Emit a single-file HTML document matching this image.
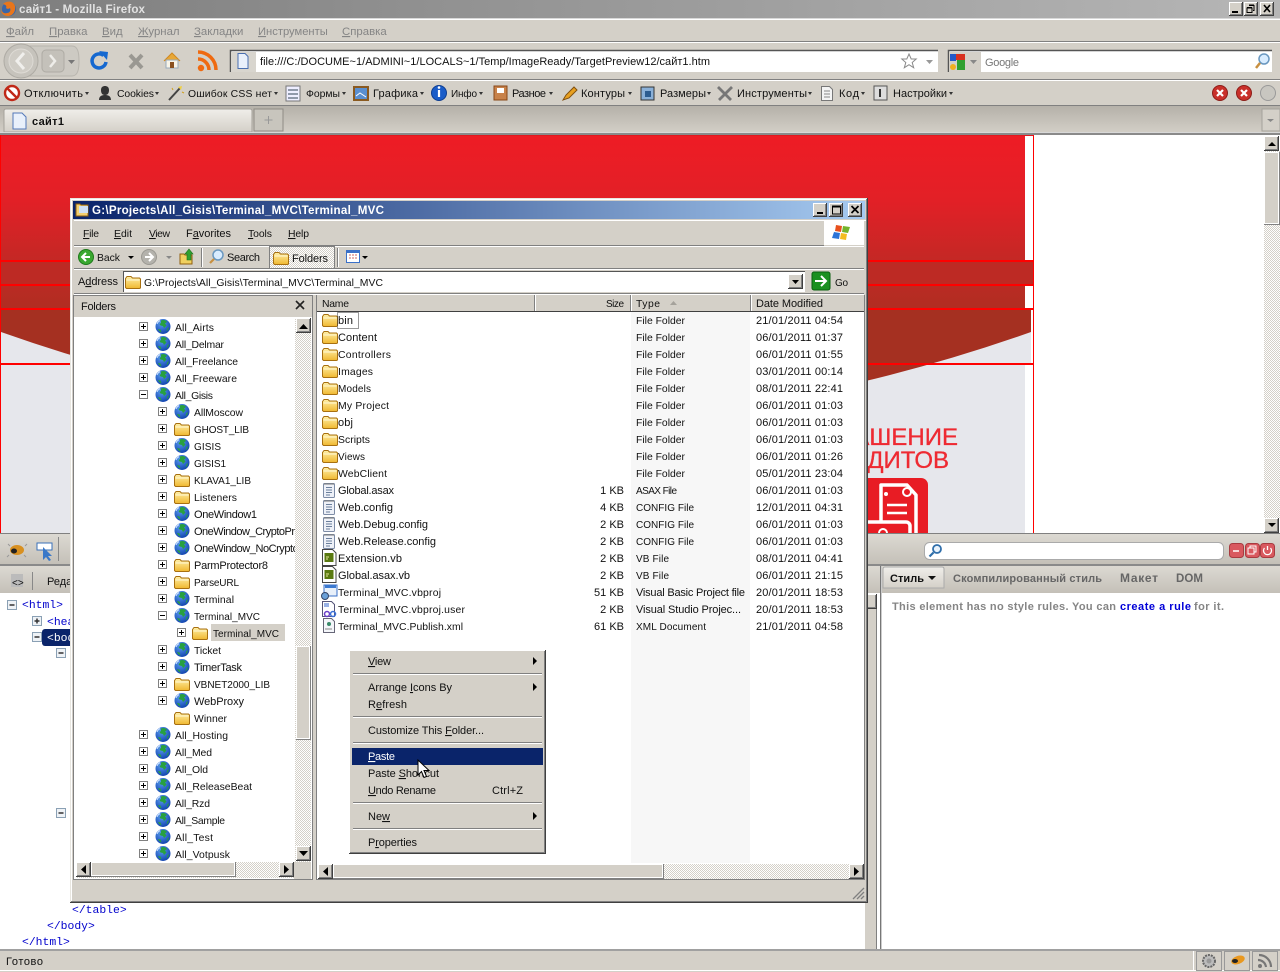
<!DOCTYPE html>
<html lang="ru"><head><meta charset="utf-8"><title>сайт1 - Mozilla Firefox</title>
<style>
html,body{margin:0;padding:0;width:1280px;height:972px;overflow:hidden;background:#fff}
svg{display:block}
text{font-family:"Liberation Sans",sans-serif;font-size:11px;fill:#111;white-space:pre}
text.s{font-size:10px}
text.h{font-size:10.4px}
.m{fill:#858585;font-size:11.4px}
.b{font-weight:bold}
.c{font-family:"Liberation Mono",monospace;font-size:11.4px;fill:#00c}
.u{text-decoration:underline}
.r{text-anchor:end}
.g{fill:#666;font-weight:bold}
</style></head><body>
<svg width="1280" height="972" viewBox="0 0 1280 972" xmlns="http://www.w3.org/2000/svg">
<defs>
<linearGradient id="tt" x1="0" x2="1" y1="0" y2="0"><stop offset="0" stop-color="#7e7e7e"/><stop offset="1" stop-color="#b6b6b6"/></linearGradient>
<linearGradient id="wt" x1="0" x2="1" y1="0" y2="0"><stop offset="0" stop-color="#0a246a"/><stop offset="1" stop-color="#a6caf0"/></linearGradient>
<linearGradient id="red" x1="0" x2="0" y1="0" y2="1"><stop offset="0" stop-color="#ee1c25"/><stop offset=".33" stop-color="#e22026"/><stop offset=".64" stop-color="#c32825"/><stop offset="1" stop-color="#a73020"/></linearGradient>
<linearGradient id="tb" x1="0" x2="0" y1="0" y2="1"><stop offset="0" stop-color="#b5b1a9"/><stop offset="1" stop-color="#d4d0c8"/></linearGradient>
<linearGradient id="tab" x1="0" x2="0" y1="0" y2="1"><stop offset="0" stop-color="#f0eeea"/><stop offset="1" stop-color="#d4d0c8"/></linearGradient>
<linearGradient id="fb" x1="0" x2="0" y1="0" y2="1"><stop offset="0" stop-color="#dcd9d2"/><stop offset="1" stop-color="#c4c0b8"/></linearGradient>
<radialGradient id="gl" cx=".4" cy=".3" r=".8"><stop offset="0" stop-color="#5a9cf0"/><stop offset="1" stop-color="#0a3aa8"/></radialGradient>
<linearGradient id="fo" x1="0" x2="0" y1="0" y2="1"><stop offset="0" stop-color="#fff0a8"/><stop offset="1" stop-color="#f0b830"/></linearGradient>
<pattern id="h" width="2" height="2" patternUnits="userSpaceOnUse"><rect width="2" height="2" fill="#fff"/><rect width="1" height="1" fill="#d4d0c8"/><rect x="1" y="1" width="1" height="1" fill="#d4d0c8"/></pattern>
<symbol id="globe" width="16" height="17" viewBox="0 0 16 17"><circle cx="8" cy="8.5" r="7.500" fill="url(#gl)"/><path d="M6 2.500c2-1 5-.5 6 1.500l-2 1.500 1.500 2-2.500 2.500-1-2-2.500-.5-1-1.500 1.500-1z" fill="#28a040"/><path d="M3 11l2.500.5 1 3c-1.500-.5-3-2-3.500-3.500z" fill="#28a040"/><path d="M12.500 10l1.500-1-1 3-1.500 1.500z" fill="#28a040"/><path d="M2 6a6.500 6.500 0 0 1 3-3.500" stroke="#cfe4ff" fill="none"/></symbol>
<symbol id="folder" width="16" height="14" viewBox="0 0 16 14"><path d="M.5 3.500 2 1.500h4l1.500 1.500h7l1 1v9l-1 .5h-13l-1-1z" fill="url(#fo)" stroke="#a87010"/><path d="M1.500 5h13" stroke="#fff8d8"/></symbol>
<symbol id="plus" width="9" height="9" viewBox="0 0 9 9"><rect x=".5" y=".5" width="8" height="8" fill="#fff" stroke="#808080"/><path d="M2 4.500h5M4.500 2v5" stroke="#000"/></symbol>
<symbol id="minus" width="9" height="9" viewBox="0 0 9 9"><rect x=".5" y=".5" width="8" height="8" fill="#fff" stroke="#808080"/><path d="M2 4.500h5" stroke="#000"/></symbol>
<symbol id="fmin" width="10" height="10" viewBox="0 0 10 10"><rect x=".5" y=".5" width="9" height="9" fill="#eef2f6" stroke="#8aa0b4"/><path d="M2.500 5h5" stroke="#333" stroke-width="1.500"/></symbol>
<symbol id="fplus" width="10" height="10" viewBox="0 0 10 10"><rect x=".5" y=".5" width="9" height="9" fill="#eef2f6" stroke="#8aa0b4"/><path d="M2.500 5h5M5 2.500v5" stroke="#333" stroke-width="1.500"/></symbol>
<symbol id="note" width="14" height="16" viewBox="0 0 14 16"><rect x="1.500" y="1.500" width="11" height="14" rx="1" fill="#eef1f8" stroke="#7d8ca6"/><path d="M4 5.500h6M4 8h6M4 10.500h6M4 13h4" stroke="#6a7f9c"/><path d="M3 1v2M5 1v2M7 1v2M9 1v2M11 1v2" stroke="#777"/></symbol>
<symbol id="vb" width="15" height="17" viewBox="0 0 15 17"><path d="M.5.500h10l3.500 3.500v12.500h-13.500z" fill="#fff" stroke="#444"/><rect x="2.500" y="4" width="9" height="9" fill="#5a7a10"/><path d="M4 8h3M4 10h2" stroke="#e8e8a0"/></symbol>
<symbol id="sb" width="15" height="15" viewBox="0 0 15 15"><rect width="15" height="15" fill="#404040"/><rect width="14" height="14" fill="#fff"/><rect x="1" y="1" width="13" height="13" fill="#808080"/><rect x="1" y="1" width="12" height="12" fill="#d4d0c8"/></symbol>
<symbol id="cap" width="14" height="14" viewBox="0 0 14 14"><rect width="14" height="14" fill="#404040"/><rect width="13" height="13" fill="#fff"/><rect x="1" y="1" width="12" height="12" fill="#808080"/><rect x="1" y="1" width="11" height="11" fill="#d4d0c8"/></symbol>
<symbol id="xc" width="16" height="16" viewBox="0 0 16 16"><circle cx="8" cy="8" r="7.500" fill="#c9302a" stroke="#8c1d18"/><path d="M5 5l6 6M11 5l-6 6" stroke="#fff" stroke-width="2.200"/></symbol>
<symbol id="rb" width="15" height="15" viewBox="0 0 15 15"><rect x=".5" y=".5" width="14" height="14" rx="3" fill="#d9595f" stroke="#a83b40"/></symbol>
<clipPath id="tc"><rect x="74" y="317" width="222" height="545"/></clipPath>
<clipPath id="pc"><rect x="0" y="135" width="1264" height="398"/></clipPath>
</defs>

<!-- browser chrome -->
<rect width="1280" height="972" fill="#d4d0c8"/>
<rect width="1280" height="18" fill="url(#tt)"/>
<rect y="18" width="1280" height="1" fill="#d8d8d8"/><rect y="19" width="1280" height="1" fill="#fff"/>
<circle cx="9" cy="9" r="7" fill="#3a66a8"/><path d="M3 4c3-3 10-4 12 2 1 5-2 10-7 10-4 0-7-3-7-6 1 2 3 4 6 3 3 0 4-3 3-5-1 1-3 1-4 0 1-2 0-3-3-4z" fill="#e8761c"/>
<text x="19" y="13" class="b" style="fill:#e2e2e2;font-size:11.6px" textLength="126">сайт1 - Mozilla Firefox</text>
<use href="#cap" x="1229" y="2"/><use href="#cap" x="1244" y="2"/><use href="#cap" x="1260" y="2"/>
<path d="M1232 12h6" stroke="#000" stroke-width="2"/>
<path d="M1249 5.500h5v5h-1M1247 8h5v4.500h-5z" fill="none" stroke="#000"/><path d="M1249 5h5M1247 7.500h5" stroke="#000" stroke-width="1"/>
<path d="M1264 5l6 7M1270 5l-6 7" stroke="#000" stroke-width="1.600"/>

<text x="6" y="35" class="m"><tspan class="u">Ф</tspan>айл</text><text x="49" y="35" class="m"><tspan class="u">П</tspan>равка</text><text x="102" y="35" class="m"><tspan class="u">В</tspan>ид</text><text x="138" y="35" class="m"><tspan class="u">Ж</tspan>урнал</text><text x="194" y="35" class="m"><tspan class="u">З</tspan>акладки</text><text x="258" y="35" class="m" style="font-size:11.2px"><tspan class="u">И</tspan>нструменты</text><text x="342" y="35" class="m"><tspan class="u">С</tspan>правка</text>
<rect y="41" width="1280" height="1" fill="#808080"/><rect y="42" width="1280" height="1" fill="#fff"/>
<!-- nav -->
<path d="M22 46h50c6 0 7 7 7 15s-1 15-7 15H22z" fill="#cdcac3" stroke="#b8b5ae"/>
<circle cx="21" cy="61" r="17" fill="#c6c3bc" stroke="#aeaba4"/><circle cx="21" cy="61" r="12" fill="#cfccc5" stroke="#dedbd5"/>
<path d="M24 53l-7 8 7 8" fill="none" stroke="#f0efec" stroke-width="3"/>
<rect x="42" y="50" width="22" height="22" rx="4" fill="#c4c1ba" stroke="#aeaba4"/>
<path d="M50 55l5 6-5 6" fill="none" stroke="#eeede9" stroke-width="2.500"/>
<path d="M68 60h7l-3.500 4z" fill="#777"/>
<path d="M106 62a7 7 0 1 1-2.500-6.500" fill="none" stroke="#1568d0" stroke-width="3.500"/><path d="M99 51l9 1-1 8z" fill="#1568d0"/>
<path d="M130 55l12 13M142 55l-12 13" stroke="#9a9892" stroke-width="4"/>
<path d="M164 61l8-8 8 8" fill="#e8a838" stroke="#d08820"/><path d="M166 60h12v8h-12z" fill="#f8f4e8" stroke="#9ab"/><rect x="170" y="62" width="4" height="6" fill="#8a5020"/>
<circle cx="201" cy="68" r="3.200" fill="#ef6a10"/><path d="M198 59a11 11 0 0 1 11 11" fill="none" stroke="#ef6a10" stroke-width="3.500"/><path d="M198 52a18 18 0 0 1 18 18" fill="none" stroke="#ef6a10" stroke-width="3.500"/>
<rect x="230" y="50" width="708" height="22" fill="#fff"/><path d="M230.500 72V50.500H938" fill="none" stroke="#555" stroke-width="1.500"/>
<rect x="231" y="52" width="25" height="20" fill="#d8d5ce"/>
<path d="M238 53.500h7l3 3v12h-10z" fill="#e9f0fb" stroke="#4a6fb0"/>
<text x="260" y="65" textLength="450">file:///C:/DOCUME~1/ADMINI~1/LOCALS~1/Temp/ImageReady/TargetPreview12/сайт1.htm</text>
<path d="M909 54l2.200 5h5l-4 3.500 1.500 5.200-4.700-3-4.700 3 1.500-5.200-4-3.500h5z" fill="#fff" stroke="#8a8a8a"/>
<path d="M926 60h7l-3.500 4z" fill="#999"/>
<rect x="948" y="50" width="324" height="22" fill="#fff"/><path d="M948.500 72V50.500H1272" fill="none" stroke="#555" stroke-width="1.500"/>
<rect x="949" y="52" width="32" height="20" fill="#d4d0c8"/>
<rect x="950" y="54" width="6" height="7" fill="#2458c8"/><rect x="956" y="54" width="9" height="6" fill="#d83020"/><circle cx="953" cy="67" r="3" fill="#f0b020"/><rect x="957" y="60" width="8" height="10" fill="#30a030"/>
<path d="M970 60h7l-3.500 4z" fill="#888"/>
<text x="985" y="66" style="fill:#777" textLength="34">Google</text>
<circle cx="1264" cy="59" r="5" fill="#d8ecff" stroke="#6a98c0" stroke-width="1.500"/><path d="M1260 63l-4 5" stroke="#c89040" stroke-width="2.500"/>
<rect y="79" width="1280" height="1" fill="#808080"/><rect y="80" width="1280" height="1" fill="#fff"/>
<!-- web dev toolbar -->
<circle cx="12" cy="93" r="7" fill="#fff" stroke="#c02818" stroke-width="2.400"/><path d="M7.500 88.500l9 9" stroke="#c02818" stroke-width="2.400"/>
<text x="24" y="97" textLength="59">Отключить</text><path d="M85 92h4l-2 3z" fill="#333"/>
<path d="M99 100c0-4 3-5 6-5s6 1 6 5zM105 95c-3 0-4-2-4-5s2-4 4-4 4 1 4 4-1 5-4 5z" fill="#333"/>
<text x="117" y="97" class="h" textLength="37">Cookies</text><path d="M155 92h4l-2 3z" fill="#333"/>
<path d="M169 100l11-12" stroke="#444" stroke-width="2"/><path d="M178 87l4-1-1 4z" fill="#f0d040"/><path d="M172 88l1 2M182 92l2 1" stroke="#d0a020"/>
<text x="188" y="97" class="h" textLength="84">Ошибок CSS нет</text><path d="M274 92h4l-2 3z" fill="#333"/>
<rect x="286" y="86" width="14" height="15" fill="#eef" stroke="#777"/><path d="M288 90h10M288 94h10M288 98h10" stroke="#345"/>
<text x="306" y="97" class="h" textLength="34">Формы</text><path d="M342 92h4l-2 3z" fill="#333"/>
<rect x="354" y="87" width="14" height="13" fill="#5a8fd0" stroke="#8a5a20" stroke-width="2"/><path d="M356 96l4-3 6 4" stroke="#fff" fill="none"/>
<text x="373" y="97" textLength="45">Графика</text><path d="M420 92h4l-2 3z" fill="#333"/>
<circle cx="439" cy="93" r="7.500" fill="#1a5cc8" stroke="#0e3e90"/><path d="M439 90v7" stroke="#fff" stroke-width="2.200"/><circle cx="439" cy="87.500" r="1.300" fill="#fff"/>
<text x="451" y="97" class="s" textLength="26">Инфо</text><path d="M479 92h4l-2 3z" fill="#333"/>
<rect x="494" y="86" width="13" height="14" fill="#c8824a" stroke="#884818"/><rect x="497" y="88" width="7" height="5" fill="#fff"/>
<text x="512" y="97" textLength="34">Разное</text><path d="M549 92h4l-2 3z" fill="#333"/>
<path d="M563 100l3-5 8-8 3 3-8 8z" fill="#e8a020" stroke="#805010"/>
<text x="581" y="97" textLength="44">Контуры</text><path d="M628 92h4l-2 3z" fill="#333"/>
<rect x="641" y="87" width="13" height="13" fill="#8ab0d8" stroke="#333"/><rect x="645" y="91" width="6" height="6" fill="#2c5c90"/>
<text x="660" y="97" textLength="46">Размеры</text><path d="M707 92h4l-2 3z" fill="#333"/>
<path d="M718 87l13 13M732 87l-13 13" stroke="#777" stroke-width="2.800"/>
<text x="737" y="97" textLength="70">Инструменты</text><path d="M808 92h4l-2 3z" fill="#333"/>
<path d="M821.500 86.500h8l3 3v11h-11z" fill="#f4f4f4" stroke="#777"/><path d="M824 91h6M824 94h6M824 97h6" stroke="#888"/>
<text x="839" y="97" textLength="20">Код</text><path d="M861 92h4l-2 3z" fill="#333"/>
<rect x="874" y="86" width="13" height="14" fill="#ddd" stroke="#555"/><path d="M880 89v8" stroke="#333" stroke-width="2"/>
<text x="893" y="97" textLength="54">Настройки</text><path d="M949 92h4l-2 3z" fill="#333"/>
<use href="#xc" x="1212" y="85"/><use href="#xc" x="1236" y="85"/><circle cx="1268" cy="93" r="7.500" fill="#c8c6c0" stroke="#999"/>
<rect y="105" width="1280" height="1" fill="#808080"/>
<!-- tabs -->
<rect y="106" width="1280" height="28" fill="url(#tb)"/>
<path d="M4 132v-21q0-2 2-2h244q2 0 2 2v21z" fill="url(#tab)" stroke="#a5a29b"/>
<path d="M13 113h9l4 4v12H13z" fill="#e9f0fb" stroke="#5478b8"/>
<text x="32" y="125" class="b" textLength="32">сайт1</text>
<rect x="254" y="109" width="29" height="22" fill="#c8c5bd" stroke="#8f8c85"/><path d="M268.500 116v8M264.500 120h8" stroke="#999"/>
<rect x="1262" y="109" width="18" height="22" fill="#d4d0c8" stroke="#a5a29b"/><path d="M1267 119h7l-3.500 3z" fill="#888"/>
<rect y="132" width="1280" height="1" fill="#d8d8d8"/><rect y="133" width="1280" height="2" fill="#8a8a8a"/>

<!-- page -->
<rect y="135" width="1280" height="398" fill="#fff"/>
<g clip-path="url(#pc)">
<rect x="1" y="365" width="1024" height="168" fill="#e6e7ec"/>
<rect x="1" y="136" width="1024" height="197" fill="url(#red)"/>
<rect x="1" y="261" width="1032" height="24" fill="#bd2a24"/>
<rect x="1" y="309" width="1030" height="55" fill="#e6e7ec"/>
<path d="M1 309H1031V332Q515 514 1 332z" fill="#a53021"/>
<rect x="0" y="135" width="1034" height="1" fill="#e01820"/>
<rect x="0" y="135" width="1" height="398" fill="#f00"/>
<rect x="1033" y="135" width="1" height="398" fill="#f00"/>
<rect x="0" y="260" width="1034" height="2" fill="#f00"/><rect x="0" y="284" width="1034" height="2" fill="#f00"/><rect x="0" y="308" width="1034" height="2" fill="#f00"/><rect x="0" y="363" width="1034" height="2" fill="#f00"/>
<text x="958" y="445" style="font-size:24px;fill:#ee2a32;text-anchor:end;stroke:#ee2a32;stroke-width:.3">СОГЛАШЕНИЕ</text>
<text x="949" y="468" style="font-size:24px;fill:#ee2a32;text-anchor:end;stroke:#ee2a32;stroke-width:.3">КРЕДИТОВ</text>
<rect x="850" y="478" width="78" height="80" rx="7" fill="#e81c24"/>
<path d="M881 485h26l9 10v40h-35z" fill="none" stroke="#fff" stroke-width="3.500" stroke-linejoin="round"/><circle cx="907" cy="492" r="4" fill="#e81c24" stroke="#fff" stroke-width="2"/><circle cx="886" cy="494" r="2" fill="#fff"/><path d="M887 505h20M887 513h20" stroke="#fff" stroke-width="2.500"/><rect x="860" y="522" width="50" height="30" rx="4" fill="#e81c24" stroke="#fff" stroke-width="3.500"/><circle cx="883" cy="533" r="4" fill="none" stroke="#fff" stroke-width="2"/>
</g>
<use href="#sb" x="1264" y="136"/><path d="M1268 146h8l-4-4z" fill="#000"/>
<rect x="1264" y="151" width="16" height="367" fill="url(#h)"/>
<rect x="1264" y="152" width="16" height="73" fill="#808080"/><rect x="1264" y="152" width="15" height="72" fill="#fff"/><rect x="1265" y="153" width="13" height="70" fill="#d4d0c8"/>
<use href="#sb" x="1264" y="518"/><path d="M1268 523h8l-4 4z" fill="#000"/>

<!-- firebug -->
<rect y="533" width="1280" height="1" fill="#808080"/>
<rect y="534" width="1280" height="30" fill="url(#fb)"/><rect y="564" width="1280" height="2" fill="#8a8a8a"/>
<rect y="566" width="1280" height="27" fill="url(#fb)"/>
<rect y="593" width="1280" height="356" fill="#fff"/>
<ellipse cx="17" cy="550" rx="7" ry="5" fill="#d89020"/><ellipse cx="14" cy="551" rx="3" ry="2.500" fill="#222"/><path d="M9 555l-2 2M25 546l2-2M10 546l-2-2M24 555l2 2" stroke="#999"/>
<rect x="37" y="543" width="15" height="7" fill="#fff" stroke="#3a70b8"/><path d="M43 547v13l3-3 3 4 2-1-3-4h4z" fill="#3a78c8"/>
<rect x="58" y="537" width="1" height="24" fill="#888"/>
<rect x="11" y="574" width="12" height="13" fill="#bbb"/><text x="12" y="586" class="s">&lt;&gt;</text>
<rect x="32" y="572" width="1" height="18" fill="#888"/>
<text x="47" y="585">Редактор</text>

<use href="#fmin" x="7" y="600"/><text x="22" y="608" class="c">&lt;html&gt;</text>
<use href="#fplus" x="32" y="616"/><text x="47" y="625" class="c">&lt;head/&gt;</text>
<use href="#fmin" x="32" y="632"/><rect x="42" y="629" width="40" height="17" rx="3" fill="#0a246a"/><text x="47" y="641" class="c" style="fill:#fff">&lt;body&gt;</text>
<use href="#fmin" x="56" y="648"/>
<use href="#fmin" x="56" y="808"/>
<text x="72" y="913" class="c">&lt;/table&gt;</text>
<text x="47" y="929" class="c">&lt;/body&gt;</text>
<text x="22" y="945" class="c">&lt;/html&gt;</text>

<rect x="865" y="594" width="12" height="355" fill="#d4d0c8"/><rect x="876" y="594" width="1" height="355" fill="#808080"/>
<use href="#sb" x="862" y="594"/>
<rect x="880" y="566" width="1" height="383" fill="#777"/><rect x="881" y="566" width="1" height="383" fill="#ccc"/>

<rect x="924.500" y="542.500" width="299" height="17" rx="5" fill="#fff" stroke="#aaa"/>
<circle cx="937" cy="549" r="4" fill="#e8f2fc" stroke="#2f6eaa" stroke-width="1.800"/><path d="M933.500 552.500l-4 4" stroke="#2f6eaa" stroke-width="2.200"/>
<use href="#rb" x="1229" y="543"/><use href="#rb" x="1245" y="543"/><use href="#rb" x="1260" y="543"/>
<path d="M1233 551h6" stroke="#fff" stroke-width="1.500"/><rect x="1250" y="546" width="6" height="6" fill="none" stroke="#fff"/><rect x="1248" y="548" width="6" height="6" fill="#d9595f" stroke="#fff"/><path d="M1267.500 546v4M1264.500 548a4 4 0 1 0 6 0" fill="none" stroke="#fff" stroke-width="1.300"/>
<path d="M883 588v-19q0-2 2-2h57q2 0 2 2v19z" fill="url(#tab)" stroke="#aaa"/>
<text x="890" y="582" class="b" textLength="34">Стиль</text><path d="M928 576h8l-4 4z" fill="#111"/>
<text x="953" y="582" class="g" textLength="149">Скомпилированный стиль</text><text x="1120" y="582" class="g" style="font-size:12px" textLength="38">Макет</text><text x="1176" y="582" class="g" style="font-size:11.500px" textLength="27">DOM</text>
<text x="892" y="610" class="b" style="fill:#858585" textLength="224">This element has no style rules. You can</text>
<text x="1120" y="610" class="b" style="fill:#0000d8" textLength="71">create a rule</text>
<text x="1194" y="610" class="b" style="fill:#858585" textLength="30">for it.</text>

<!-- status -->
<rect y="949" width="1280" height="2" fill="#a0a0a0"/><rect y="951" width="1280" height="21" fill="#d4d0c8"/><rect y="970" width="1280" height="1" fill="#fff"/>
<text x="6" y="965" textLength="37">Готово</text>
<rect x="1193" y="951" width="1" height="20" fill="#fff"/>
<rect x="1196.500" y="951.500" width="25" height="19" fill="#d4d0c8" stroke="#999"/><rect x="1224.500" y="951.500" width="25" height="19" fill="#d4d0c8" stroke="#999"/><rect x="1252.500" y="951.500" width="25" height="19" fill="#d4d0c8" stroke="#999"/>
<circle cx="1209" cy="961" r="6" fill="#bbb" stroke="#666" stroke-width="2" stroke-dasharray="2 1"/><circle cx="1209" cy="961" r="2.500" fill="#999"/>
<ellipse cx="1238" cy="960" rx="7" ry="4" fill="#e89820" transform="rotate(-20 1238 960)"/><ellipse cx="1235" cy="961" rx="3" ry="2" fill="#222"/>
<circle cx="1260" cy="966" r="2" fill="#777"/><path d="M1258 960a8 8 0 0 1 8 7M1259 955a12 12 0 0 1 12 12" fill="none" stroke="#777" stroke-width="2.200"/>

<!-- explorer window -->
<rect x="70" y="198" width="798" height="705" fill="#d4d0c8"/>
<path d="M70.500 903V198.500H867.500" fill="none" stroke="#e8e6e0"/><path d="M70 902.500H867.500V198" fill="none" stroke="#404040"/>
<path d="M71.500 902V199.500H866.500" fill="none" stroke="#fff"/><path d="M71 901.500H866.500V199" fill="none" stroke="#808080"/>
<rect x="73" y="201" width="792" height="18" fill="url(#wt)"/>
<path d="M76 204h4l1 1h7v11H76z" fill="#f4d070" stroke="#906010"/><rect x="79" y="206" width="9" height="7" fill="#cfe0f4"/>
<text x="92" y="214" class="b" style="fill:#fff;font-size:11.6px" textLength="292">G:\Projects\All_Gisis\Terminal_MVC\Terminal_MVC</text>
<use href="#cap" x="813" y="203"/><use href="#cap" x="829" y="203"/><use href="#cap" x="848" y="203"/>
<path d="M817 213h6" stroke="#000" stroke-width="2"/><rect x="832.500" y="206" width="8" height="8" fill="none" stroke="#000"/><path d="M832 206.500h9" stroke="#000" stroke-width="2"/><path d="M851.500 206l7 7M858.500 206l-7 7" stroke="#000" stroke-width="1.700"/>

<rect x="74" y="220" width="792" height="1" fill="#fff"/><rect x="74" y="245" width="750" height="1" fill="#808080"/><rect x="74" y="246" width="790" height="1" fill="#fff"/>
<text x="83" y="237" class="h" textLength="16"><tspan class="u">F</tspan>ile</text><text x="114" y="237" class="h" textLength="18"><tspan class="u">E</tspan>dit</text><text x="149" y="237" class="h" textLength="21"><tspan class="u">V</tspan>iew</text><text x="186" y="237" textLength="45">F<tspan class="u">a</tspan>vorites</text><text x="248" y="237" class="h" textLength="24"><tspan class="u">T</tspan>ools</text><text x="288" y="237" class="h" textLength="21"><tspan class="u">H</tspan>elp</text>
<rect x="824" y="221" width="40" height="24" fill="#fff"/>
<path d="M836 225l6 1-1 6-6-1z" fill="#e8501c"/><path d="M843 226l7 1-2 6-6-1z" fill="#74b42c"/><path d="M834 232l6 1-1 6-7-1z" fill="#2c74d8"/><path d="M841 233l6 1-1 6-6-1z" fill="#f4bc20"/>

<circle cx="86" cy="257" r="7.500" fill="#3aa830" stroke="#1e7a1a"/><path d="M90 257h-7M86 253l-4 4 4 4" fill="none" stroke="#fff" stroke-width="2"/>
<text x="97" y="261" class="h" textLength="23">Back</text><path d="M128 256h6l-3 3z" fill="#000"/>
<circle cx="149" cy="257" r="7.500" fill="#b4b2ac" stroke="#9a9892"/><path d="M145 257h7M149 253l4 4-4 4" fill="none" stroke="#fff" stroke-width="2"/>
<path d="M166 256h6l-3 3z" fill="#888"/>
<path d="M180 254l4 0 1 1h7v9h-12z" fill="#f0d060" stroke="#906010"/><path d="M189 249l4 5h-2v6h-4v-6h-2z" fill="#30a030" stroke="#1a701a" stroke-width=".6"/>
<rect x="201" y="248" width="1" height="19" fill="#808080"/><rect x="202" y="248" width="1" height="19" fill="#fff"/>
<circle cx="218" cy="255" r="5" fill="#d8ecff" stroke="#6a98c0" stroke-width="1.500"/><path d="M214 259l-4 4" stroke="#c89040" stroke-width="2.200"/>
<text x="227" y="261" textLength="33">Search</text>
<rect x="269.500" y="246.500" width="65" height="22" fill="url(#h)" stroke="#808080"/>
<use href="#folder" x="273" y="251"/><text x="292" y="262" textLength="36">Folders</text>
<rect x="337" y="248" width="1" height="19" fill="#808080"/><rect x="338" y="248" width="1" height="19" fill="#fff"/>
<rect x="346.500" y="250.500" width="13" height="12" fill="#fff" stroke="#3a70c8"/><rect x="346" y="250" width="14" height="3" fill="#3a70c8"/><path d="M349 255h2M352 255h2M355 255h2M349 258h2M352 258h2M355 258h2" stroke="#c66"/>
<path d="M362 256h6l-3 3z" fill="#000"/>
<rect x="74" y="268" width="790" height="1" fill="#808080"/><rect x="74" y="269" width="790" height="1" fill="#fff"/>
<text x="78" y="285" textLength="40">A<tspan class="u">d</tspan>dress</text>
<rect x="123" y="271" width="682" height="21" fill="#fff"/><path d="M123.500 292V271.500H805" fill="none" stroke="#555"/>
<use href="#folder" x="125" y="275"/>
<text x="144" y="286" class="h" textLength="239">G:\Projects\All_Gisis\Terminal_MVC\Terminal_MVC</text>
<use href="#sb" x="788" y="274"/><path d="M792 280h7l-3.500 4z" fill="#000"/>
<rect x="812" y="272" width="18" height="18" rx="2" fill="#1a9020" stroke="#0a6010"/><path d="M815 281h11M821 276l5 5-5 5" fill="none" stroke="#fff" stroke-width="2"/>
<text x="835" y="286" class="s" textLength="13">Go</text>
<rect x="74" y="293" width="790" height="1" fill="#808080"/><rect x="74" y="294" width="790" height="1" fill="#fff"/>

<!-- folders pane -->
<rect x="73.500" y="295.500" width="239" height="584" fill="#d4d0c8" stroke="#808080"/>
<text x="81" y="310" textLength="35">Folders</text>
<path d="M296 301l8 8M304 301l-8 8" stroke="#222" stroke-width="1.600"/>
<rect x="74" y="317" width="238" height="562" fill="#fff"/>
<g clip-path="url(#tc)">
<use href="#plus" x="139" y="322"/><use href="#globe" x="155" y="318"/><text x="175" y="331" class="h" textLength="39">All_Airts</text>
<use href="#plus" x="139" y="339"/><use href="#globe" x="155" y="335"/><text x="175" y="348" class="h" textLength="49">All_Delmar</text>
<use href="#plus" x="139" y="356"/><use href="#globe" x="155" y="352"/><text x="175" y="365" class="h" textLength="63">All_Freelance</text>
<use href="#plus" x="139" y="373"/><use href="#globe" x="155" y="369"/><text x="175" y="382" class="h" textLength="62">All_Freeware</text>
<use href="#minus" x="139" y="390"/><use href="#globe" x="155" y="386"/><text x="175" y="399" class="h" textLength="38">All_Gisis</text>
<use href="#plus" x="158" y="407"/><use href="#globe" x="174" y="403"/><text x="194" y="416" class="h" textLength="49">AllMoscow</text>
<use href="#plus" x="158" y="424"/><use href="#folder" x="174" y="422"/><text x="194" y="433" class="s" textLength="55">GHOST_LIB</text>
<use href="#plus" x="158" y="441"/><use href="#globe" x="174" y="437"/><text x="194" y="450" class="s" textLength="27">GISIS</text>
<use href="#plus" x="158" y="458"/><use href="#globe" x="174" y="454"/><text x="194" y="467" class="s" textLength="32">GISIS1</text>
<use href="#plus" x="158" y="475"/><use href="#folder" x="174" y="473"/><text x="194" y="484" class="s" textLength="57">KLAVA1_LIB</text>
<use href="#plus" x="158" y="492"/><use href="#folder" x="174" y="490"/><text x="194" y="501" class="h" textLength="43">Listeners</text>
<use href="#plus" x="158" y="509"/><use href="#globe" x="174" y="505"/><text x="194" y="518" textLength="63">OneWindow1</text>
<use href="#plus" x="158" y="526"/><use href="#globe" x="174" y="522"/><text x="194" y="535" textLength="128">OneWindow_CryptoProvider</text>
<use href="#plus" x="158" y="543"/><use href="#globe" x="174" y="539"/><text x="194" y="552" textLength="142">OneWindow_NoCryptoProvider</text>
<use href="#plus" x="158" y="560"/><use href="#folder" x="174" y="558"/><text x="194" y="569" textLength="74">ParmProtector8</text>
<use href="#plus" x="158" y="577"/><use href="#folder" x="174" y="575"/><text x="194" y="586" class="s" textLength="45">ParseURL</text>
<use href="#plus" x="158" y="594"/><use href="#globe" x="174" y="590"/><text x="194" y="603" class="h" textLength="40">Terminal</text>
<use href="#minus" x="158" y="611"/><use href="#globe" x="174" y="607"/><text x="194" y="620" class="s" textLength="66">Terminal_MVC</text>
<use href="#plus" x="177" y="628"/><use href="#folder" x="192" y="626"/><rect x="211" y="624" width="74" height="17" fill="#d4d0c8"/><text x="213" y="637" class="s" textLength="66">Terminal_MVC</text>
<use href="#plus" x="158" y="645"/><use href="#globe" x="174" y="641"/><text x="194" y="654" class="h" textLength="27">Ticket</text>
<use href="#plus" x="158" y="662"/><use href="#globe" x="174" y="658"/><text x="194" y="671" textLength="48">TimerTask</text>
<use href="#plus" x="158" y="679"/><use href="#folder" x="174" y="677"/><text x="194" y="688" class="s" textLength="76">VBNET2000_LIB</text>
<use href="#plus" x="158" y="696"/><use href="#globe" x="174" y="692"/><text x="194" y="705" textLength="50">WebProxy</text>
<use href="#folder" x="174" y="711"/><text x="194" y="722" class="h" textLength="33">Winner</text>
<use href="#plus" x="139" y="730"/><use href="#globe" x="155" y="726"/><text x="175" y="739" class="h" textLength="53">All_Hosting</text>
<use href="#plus" x="139" y="747"/><use href="#globe" x="155" y="743"/><text x="175" y="756" class="h" textLength="37">All_Med</text>
<use href="#plus" x="139" y="764"/><use href="#globe" x="155" y="760"/><text x="175" y="773" class="h" textLength="33">All_Old</text>
<use href="#plus" x="139" y="781"/><use href="#globe" x="155" y="777"/><text x="175" y="790" class="h" textLength="77">All_ReleaseBeat</text>
<use href="#plus" x="139" y="798"/><use href="#globe" x="155" y="794"/><text x="175" y="807" class="h" textLength="35">All_Rzd</text>
<use href="#plus" x="139" y="815"/><use href="#globe" x="155" y="811"/><text x="175" y="824" class="h" textLength="50">All_Sample</text>
<use href="#plus" x="139" y="832"/><use href="#globe" x="155" y="828"/><text x="175" y="841" class="h" textLength="38">All_Test</text>
<use href="#plus" x="139" y="849"/><use href="#globe" x="155" y="845"/><text x="175" y="858" class="h" textLength="55">All_Votpusk</text>
</g>
<rect x="295" y="318" width="16" height="544" fill="url(#h)"/>
<use href="#sb" x="296" y="318"/><path d="M299 329h9l-4.500-5z" fill="#000"/>
<rect x="296" y="646" width="15" height="94" fill="#808080"/><rect x="296" y="646" width="14" height="93" fill="#fff"/><rect x="297" y="647" width="12" height="91" fill="#d4d0c8"/>
<use href="#sb" x="296" y="846"/><path d="M299 851h9l-4.500 5z" fill="#000"/>
<rect x="76" y="862" width="219" height="16" fill="url(#h)"/>
<use href="#sb" x="76" y="862"/><path d="M86 865v9l-5-4.500z" fill="#000"/>
<rect x="91" y="862" width="145" height="15" fill="#808080"/><rect x="91" y="862" width="144" height="14" fill="#fff"/><rect x="92" y="863" width="142" height="12" fill="#d4d0c8"/>
<use href="#sb" x="279" y="862"/><path d="M284 865v9l5-4.500z" fill="#000"/>
<rect x="294" y="862" width="17" height="17" fill="#d4d0c8"/>

<!-- files pane -->
<rect x="316.500" y="295.500" width="548" height="584" fill="#fff" stroke="#808080"/>
<rect x="317" y="295" width="547" height="16" fill="#d4d0c8"/><rect x="317" y="311" width="547" height="1" fill="#404040"/>
<rect x="534" y="295" width="1" height="16" fill="#808080"/><rect x="535" y="295" width="1" height="16" fill="#fff"/>
<rect x="630" y="295" width="1" height="16" fill="#808080"/><rect x="631" y="295" width="1" height="16" fill="#fff"/>
<rect x="750" y="295" width="1" height="16" fill="#808080"/><rect x="751" y="295" width="1" height="16" fill="#fff"/>
<text x="322" y="307" class="h" textLength="27">Name</text><text x="606" y="307" class="s" textLength="18">Size</text><text x="636" y="307" class="h" textLength="24">Type</text><path d="M670 305h7l-3.500-4z" fill="#a5a29b"/><text x="756" y="307" textLength="67">Date Modified</text>
<rect x="631" y="312" width="119" height="551" fill="#f7f7f7"/>

<use href="#folder" x="322" y="313"/><rect x="337.500" y="312.500" width="21" height="16" fill="none" stroke="#333" stroke-dasharray="1 1"/><text x="338" y="324" textLength="15">bin</text><text x="636" y="324" class="h" textLength="49">File Folder</text><text x="756" y="324" textLength="87">21/01/2011 04:54</text>
<use href="#folder" x="322" y="330"/><text x="338" y="341" textLength="39">Content</text><text x="636" y="341" class="h" textLength="49">File Folder</text><text x="756" y="341" textLength="87">06/01/2011 01:37</text>
<use href="#folder" x="322" y="347"/><text x="338" y="358" class="h" textLength="53">Controllers</text><text x="636" y="358" class="h" textLength="49">File Folder</text><text x="756" y="358" textLength="87">06/01/2011 01:55</text>
<use href="#folder" x="322" y="364"/><text x="338" y="375" class="h" textLength="35">Images</text><text x="636" y="375" class="h" textLength="49">File Folder</text><text x="756" y="375" textLength="87">03/01/2011 00:14</text>
<use href="#folder" x="322" y="381"/><text x="338" y="392" class="s" textLength="33">Models</text><text x="636" y="392" class="h" textLength="49">File Folder</text><text x="756" y="392" textLength="87">08/01/2011 22:41</text>
<use href="#folder" x="322" y="398"/><text x="338" y="409" class="h" textLength="51">My Project</text><text x="636" y="409" class="h" textLength="49">File Folder</text><text x="756" y="409" textLength="87">06/01/2011 01:03</text>
<use href="#folder" x="322" y="415"/><text x="338" y="426" textLength="15">obj</text><text x="636" y="426" class="h" textLength="49">File Folder</text><text x="756" y="426" textLength="87">06/01/2011 01:03</text>
<use href="#folder" x="322" y="432"/><text x="338" y="443" class="h" textLength="32">Scripts</text><text x="636" y="443" class="h" textLength="49">File Folder</text><text x="756" y="443" textLength="87">06/01/2011 01:03</text>
<use href="#folder" x="322" y="449"/><text x="338" y="460" class="s" textLength="27">Views</text><text x="636" y="460" class="h" textLength="49">File Folder</text><text x="756" y="460" textLength="87">06/01/2011 01:26</text>
<use href="#folder" x="322" y="466"/><text x="338" y="477" class="h" textLength="49">WebClient</text><text x="636" y="477" class="h" textLength="49">File Folder</text><text x="756" y="477" textLength="87">05/01/2011 23:04</text>
<use href="#note" x="322" y="482"/><text x="338" y="494" textLength="56">Global.asax</text><text x="624" y="494" class="r">1 KB</text><text x="636" y="494" class="s" textLength="41">ASAX File</text><text x="756" y="494" textLength="87">06/01/2011 01:03</text>
<use href="#note" x="322" y="499"/><text x="338" y="511" textLength="55">Web.config</text><text x="624" y="511" class="r">4 KB</text><text x="636" y="511" class="s" textLength="58">CONFIG File</text><text x="756" y="511" textLength="87">12/01/2011 04:31</text>
<use href="#note" x="322" y="516"/><text x="338" y="528" textLength="90">Web.Debug.config</text><text x="624" y="528" class="r">2 KB</text><text x="636" y="528" class="s" textLength="58">CONFIG File</text><text x="756" y="528" textLength="87">06/01/2011 01:03</text>
<use href="#note" x="322" y="533"/><text x="338" y="545" textLength="98">Web.Release.config</text><text x="624" y="545" class="r">2 KB</text><text x="636" y="545" class="s" textLength="58">CONFIG File</text><text x="756" y="545" textLength="87">06/01/2011 01:03</text>
<use href="#vb" x="322" y="549"/><text x="338" y="562" textLength="64">Extension.vb</text><text x="624" y="562" class="r">2 KB</text><text x="636" y="562" class="s" textLength="33">VB File</text><text x="756" y="562" textLength="87">08/01/2011 04:41</text>
<use href="#vb" x="322" y="566"/><text x="338" y="579" textLength="72">Global.asax.vb</text><text x="624" y="579" class="r">2 KB</text><text x="636" y="579" class="s" textLength="33">VB File</text><text x="756" y="579" textLength="87">06/01/2011 21:15</text>
<rect x="324" y="585" width="13" height="11" fill="#e8f0fa" stroke="#3a70c8"/><rect x="325" y="585" width="11" height="3" fill="#3a78d0"/><circle cx="325" cy="596" r="3.500" fill="#6aa0d8" stroke="#346"/><text x="338" y="596" class="h" textLength="103">Terminal_MVC.vbproj</text><text x="624" y="596" class="r">51 KB</text><text x="636" y="596" textLength="109">Visual Basic Project file</text><text x="756" y="596" textLength="87">20/01/2011 18:53</text>
<path d="M322.500 601.500h9l3 3v12h-12z" fill="#fff" stroke="#557"/><path d="M324 604h5M324 606h5" stroke="#36c"/><circle cx="327" cy="614" r="2.500" fill="none" stroke="#6a3ec8" stroke-width="1.500"/><circle cx="333" cy="614" r="2.500" fill="none" stroke="#3a70d8" stroke-width="1.500"/><text x="338" y="613" class="h" textLength="127">Terminal_MVC.vbproj.user</text><text x="624" y="613" class="r">2 KB</text><text x="636" y="613" textLength="105">Visual Studio Projec...</text><text x="756" y="613" textLength="87">20/01/2011 18:53</text>
<path d="M323.500 618.500h8l3 3v11h-11z" fill="#f4f6fa" stroke="#667"/><circle cx="329" cy="624" r="2" fill="#3a8a6a"/><path d="M325 629h7" stroke="#888"/><text x="338" y="630" class="h" textLength="125">Terminal_MVC.Publish.xml</text><text x="624" y="630" class="r">61 KB</text><text x="636" y="630" class="s" textLength="70">XML Document</text><text x="756" y="630" textLength="87">21/01/2011 04:58</text>

<rect x="318" y="864" width="546" height="15" fill="url(#h)"/>
<use href="#sb" x="318" y="864"/><path d="M328 867v9l-5-4.500z" fill="#000"/>
<rect x="333" y="864" width="331" height="15" fill="#808080"/><rect x="333" y="864" width="330" height="14" fill="#fff"/><rect x="334" y="865" width="328" height="12" fill="#d4d0c8"/>
<use href="#sb" x="849" y="864"/><path d="M854 867v9l5-4.500z" fill="#000"/>
<path d="M853 899l11-11M857 899l7-7M861 899l3-3" stroke="#808080" stroke-width="1.300"/>

<!-- context menu -->
<rect x="349" y="650" width="197" height="204" fill="#404040"/>
<rect x="349" y="650" width="196" height="203" fill="#fff"/>
<rect x="350" y="651" width="195" height="202" fill="#808080"/>
<rect x="350" y="651" width="194" height="201" fill="#d4d0c8"/>
<text x="368" y="665" textLength="23"><tspan class="u">V</tspan>iew</text><path d="M533 657v8l4-4z" fill="#000"/>
<rect x="353" y="673" width="189" height="1" fill="#808080"/><rect x="353" y="674" width="189" height="1" fill="#fff"/>
<text x="368" y="691" textLength="84">Arrange <tspan class="u">I</tspan>cons By</text><path d="M533 683v8l4-4z" fill="#000"/>
<text x="368" y="708" textLength="39">R<tspan class="u">e</tspan>fresh</text>
<rect x="353" y="716" width="189" height="1" fill="#808080"/><rect x="353" y="717" width="189" height="1" fill="#fff"/>
<text x="368" y="734" textLength="116">Customize This <tspan class="u">F</tspan>older...</text>
<rect x="353" y="742" width="189" height="1" fill="#808080"/><rect x="353" y="743" width="189" height="1" fill="#fff"/>
<rect x="352" y="748" width="191" height="17" fill="#0a246a"/>
<text x="368" y="760" style="fill:#fff" textLength="27"><tspan class="u">P</tspan>aste</text>
<text x="368" y="777" textLength="71">Paste <tspan class="u">S</tspan>hortcut</text>
<text x="368" y="794" textLength="68"><tspan class="u">U</tspan>ndo Rename</text><text x="492" y="794" textLength="31">Ctrl+Z</text>
<rect x="353" y="802" width="189" height="1" fill="#808080"/><rect x="353" y="803" width="189" height="1" fill="#fff"/>
<text x="368" y="820" textLength="22">Ne<tspan class="u">w</tspan></text><path d="M533 812v8l4-4z" fill="#000"/>
<rect x="353" y="828" width="189" height="1" fill="#808080"/><rect x="353" y="829" width="189" height="1" fill="#fff"/>
<text x="368" y="846" textLength="49">P<tspan class="u">r</tspan>operties</text>
<path d="M418 760v15l3.500-3.500 2.500 6 2.500-1-2.500-6h5z" fill="#fff" stroke="#000"/>
</svg>
</body></html>
